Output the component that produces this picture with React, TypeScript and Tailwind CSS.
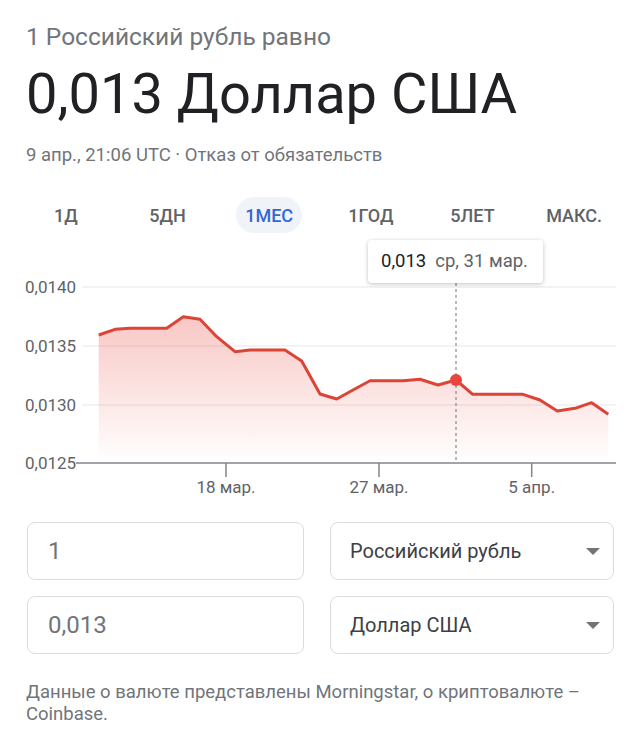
const font = { fontFamily: "Roboto, 'Noto Sans', Arial, sans-serif" };

const tabs = ["1Д", "5ДН", "1МЕС", "1ГОД", "5ЛЕТ", "МАКС."];

const points: [number, number][] = [
  [98.7, 95], [115, 89.3], [130, 88.3], [166.7, 88.3], [183.3, 76.7], [200, 79.3],
  [216.7, 96.7], [235, 111.7], [250, 110], [285, 110], [301.7, 121], [320, 154],
  [336.7, 159], [353, 150], [370, 140.7], [403, 140.7], [420, 139.3], [438, 145],
  [456, 140], [472.7, 154.3], [523, 154.3], [540, 160], [557.3, 171], [575, 168.3],
  [591.7, 162.7], [608.3, 174.3],
];

const yLabels = [
  { y: 47, t: "0,0140" },
  { y: 106, t: "0,0135" },
  { y: 165, t: "0,0130" },
  { y: 223, t: "0,0125" },
];

const xTicks = [
  { x: 226, t: "18 мар." },
  { x: 379, t: "27 мар." },
  { x: 531.7, t: "5 апр." },
];

function Chart() {
  const line = points.map(([x, y], i) => `${i ? "L" : "M"}${x} ${y}`).join(" ");
  const area = `${line} L608.3 223 L98.7 223 Z`;
  return (
    <div className="relative h-[260px]">
      <svg width="640" height="260" className="block">
        <defs>
          <linearGradient id="fill" x1="0" y1="76" x2="0" y2="223" gradientUnits="userSpaceOnUse">
            <stop offset="0" stopColor="#e8453c" stopOpacity="0.3" />
            <stop offset="1" stopColor="#e8453c" stopOpacity="0" />
          </linearGradient>
        </defs>
        {yLabels.slice(0, 3).map((l) => (
          <line key={l.t} x1="82" x2="616" y1={l.y} y2={l.y} stroke="#eeeff1" strokeWidth="1.5" />
        ))}
        <path d={area} fill="url(#fill)" />
        <line x1="76" x2="616" y1="223" y2="223" stroke="#80868b" strokeWidth="1.5" />
        {xTicks.map((t) => (
          <g key={t.t}>
            <line x1={t.x} x2={t.x} y1="223" y2="237" stroke="#80868b" strokeWidth="1.5" />
            <text x={t.x} y="253" textAnchor="middle" fontSize="17" fill="#5f6368" style={font}>
              {t.t}
            </text>
          </g>
        ))}
        {yLabels.map((l) => (
          <text key={l.t} x="25" y={l.y + 6} fontSize="17" fill="#5f6368" style={font}>
            {l.t}
          </text>
        ))}
        <line x1="456" x2="456" y1="43" y2="223" stroke="#70757a" strokeWidth="1" strokeDasharray="3 3" />
        <path d={line} fill="none" stroke="#db4437" strokeWidth="3" strokeLinejoin="round" />
        <circle cx="456" cy="140" r="6" fill="#e8453c" />
      </svg>
      <div className="absolute left-[368px] top-0 flex h-[43px] w-[175px] items-center rounded-[4px] bg-white pl-[13px] text-[18.5px] shadow-[0_1px_4px_rgba(0,0,0,0.25)]">
        <span className="text-[#202124]">0,013</span>
        <span className="ml-[9px] text-[#5f6368]">ср, 31 мар.</span>
      </div>
    </div>
  );
}

function Field({ value }: { value: string }) {
  return (
    <div className="flex h-[58px] items-center rounded-[8px] border border-[#dadce0] pl-[20px] text-[24px] text-[#70757a]">
      {value}
    </div>
  );
}

function Select({ value }: { value: string }) {
  return (
    <div className="flex h-[58px] items-center justify-between rounded-[8px] border border-[#dadce0] pl-[19px] pr-[13px] text-[20px] text-[#3c4043]">
      <span>{value}</span>
      <svg width="14" height="7" viewBox="0 0 14 7">
        <path d="M0 0 L14 0 L7 7 Z" fill="#70757a" />
      </svg>
    </div>
  );
}

export default function App() {
  return (
    <div className="min-h-[740px] w-[640px] bg-white" style={font}>
      <div className="px-[26px] pt-[23px]">
        <div className="text-[24.5px] leading-[28px] text-[#70757a]">1 Российский рубль равно</div>
        <div className="mt-[11px] text-[56px] leading-[64px] text-[#202124]">0,013 Доллар США</div>
        <div className="mt-[17px] text-[18.5px] leading-[24px] text-[#70757a]">
          9 апр., 21:06 UTC · Отказ от обязательств
        </div>
      </div>

      <div className="mt-[30px] grid grid-cols-6 px-[15px]">
        {tabs.map((t) => (
          <div key={t} className="flex justify-center">
            <span
              className={
                t === "1МЕС"
                  ? "flex h-[36px] items-center rounded-full bg-[#f0f4f9] px-[9px] text-[18px] font-medium text-[#3367d6]"
                  : "flex h-[36px] items-center px-[9px] text-[18px] font-medium text-[#5f6368]"
              }
            >
              {t}
            </span>
          </div>
        ))}
      </div>

      <div className="mt-[7px]">
        <Chart />
      </div>

      <div className="mt-[22px] grid grid-cols-[277px_284px] gap-x-[26px] gap-y-[16px] pl-[27px]">
        <Field value="1" />
        <Select value="Российский рубль" />
        <Field value="0,013" />
        <Select value="Доллар США" />
      </div>

      <div className="mt-[27px] pl-[26px] text-[18.5px] leading-[22px] text-[#70757a]">
        Данные о валюте представлены Morningstar, о криптовалюте –
        <br />
        Coinbase.
      </div>
    </div>
  );
}
